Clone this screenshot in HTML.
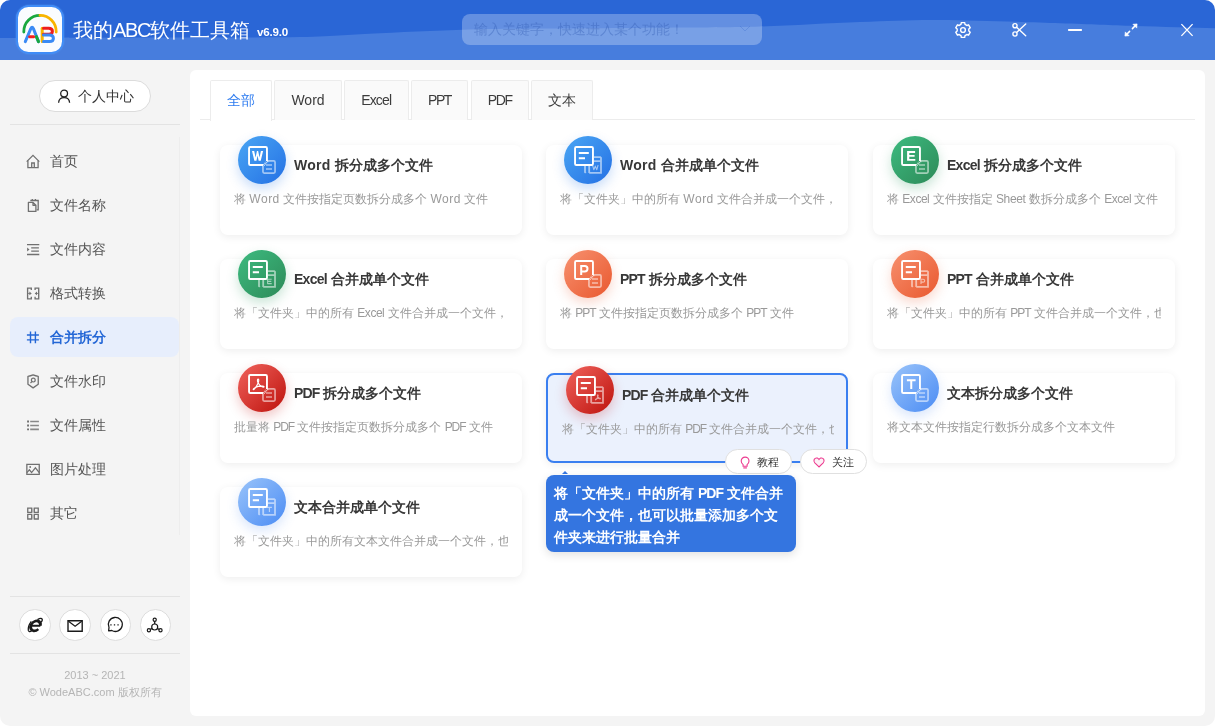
<!DOCTYPE html>
<html><head><meta charset="utf-8">
<style>
*{margin:0;padding:0;box-sizing:border-box}
html,body{width:1215px;height:726px;overflow:hidden;background:#fff;font-family:"Liberation Sans",sans-serif}
.win{position:absolute;left:0;top:0;width:1215px;height:726px;background:#f4f4f4;border-radius:10px;overflow:hidden;will-change:transform}
.hdr{position:absolute;left:0;top:0;width:1215px;height:60px}
.abs{position:absolute}
.title{position:absolute;left:73px;top:17px;color:#fff;font-size:20px;letter-spacing:0px;white-space:nowrap}
.ver{position:absolute;left:257px;top:25px;color:#fff;font-size:11.6px;font-weight:bold;letter-spacing:-0.2px}
.search{position:absolute;left:462px;top:14px;width:300px;height:31px;border-radius:8px;background:rgba(255,255,255,.27)}
.search span{position:absolute;left:12px;top:7px;font-size:14px;color:rgba(45,85,175,.36);white-space:nowrap}
.side{position:absolute;left:0;top:60px;width:190px;height:666px}
.pill{position:absolute;left:39px;top:80px;width:111.5px;height:32px;border:1px solid #dcdcdc;border-radius:16px;background:#fff}
.pill span{position:absolute;left:38px;top:7px;font-size:14px;color:#333}
.navt{font-size:14px;white-space:nowrap}
.nav{position:absolute;left:10px;width:169px;height:40px;border-radius:8px}
.nav span{position:absolute;left:40px;top:10px;font-size:14px;color:#555}
.nav svg{position:absolute;left:16px;top:13px}
.nav.on{background:#e6eefc}
.nav.on span{color:#2a6ae0;font-weight:bold}
.panel{position:absolute;left:190px;top:70px;width:1015px;height:646px;background:#fff;border-radius:6px}
.tab{position:absolute;top:80px;height:40px;border:1px solid #ececec;border-bottom:none;background:#fafafa;border-radius:2px 2px 0 0;font-size:14px;color:#3c3c3c;text-align:center;line-height:38px}
.tab.on{background:#fff;color:#2e7cf0;height:41px}
.card{position:absolute;width:302px;height:90px;background:#fff;border-radius:8px;box-shadow:0 2px 8px rgba(0,0,0,.07)}
.card .ic{position:absolute;left:18px;top:-9px;width:48px;height:48px;border-radius:50%}
.card .t{position:absolute;left:74px;top:12px;font-size:14px;font-weight:bold;color:#383838;white-space:nowrap}
.l{letter-spacing:-0.3px}
.lt{letter-spacing:-0.6px}
.card .d{position:absolute;left:14px;top:46px;font-size:12px;color:#999;white-space:nowrap;width:274px;overflow:hidden}
.card.hov{border:2px solid #3a7ff0;background:#ebf1fd}
.card.hov .ic{left:18px;top:-9px}
.card.hov .t{left:74px;top:12px}
.card.hov .d{left:14px;top:46px;width:272px}
.blue{background:linear-gradient(135deg,#4aa6f4,#2470e4);box-shadow:0 5px 12px rgba(40,120,230,.25)}
.green{background:linear-gradient(135deg,#3dbb80,#2d8a58);box-shadow:0 5px 12px rgba(40,150,90,.25)}
.orange{background:linear-gradient(135deg,#f7916f,#e9582f);box-shadow:0 5px 12px rgba(235,100,60,.25)}
.red{background:linear-gradient(135deg,#f0625c,#bd120c);box-shadow:0 5px 12px rgba(200,30,30,.25)}
.lblue{background:linear-gradient(135deg,#9ac4fa,#4b8cf4);box-shadow:0 5px 12px rgba(80,140,240,.22)}
.ic svg{position:absolute;left:0;top:0}
.btn{position:absolute;top:449px;height:25px;border:1px solid #e0e0e0;border-radius:13px;background:#fff;font-size:12px;color:#333}
.btn span{position:absolute;left:31px;top:5px;font-size:11px;color:#333}
.btn svg{position:absolute;left:12px;top:5px}
.tip{position:absolute;left:546px;top:475px;width:250px;height:77px;background:#3475e0;border-radius:8px;color:#fff;font-size:14px;font-weight:bold;line-height:22px;padding:7px 8px 0 8px;box-shadow:0 3px 10px rgba(0,0,0,.12)}
.tip:before{content:"";position:absolute;left:15.6px;top:-3.8px;border-left:3.7px solid transparent;border-right:3.7px solid transparent;border-bottom:3.8px solid #3475e0}
.circ{position:absolute;top:609.2px;width:31.4px;height:31.4px;border-radius:50%;border:1px solid #ddd;background:#fff}
.circ svg{position:absolute;left:6px;top:6px}
.copy{position:absolute;left:0;width:190px;text-align:center;font-size:11px;color:#b5b5b5}
</style></head><body>
<div class="win">
  <svg class="hdr" width="1215" height="60" viewBox="0 0 1215 60">
    <rect width="1215" height="60" fill="#2a66d6"/>
    <path d="M0 38 C33.3 37.83 100.0 37.67 150 37.5 C200.0 37.33 261.7 37.72 300 37 C338.3 36.28 350.0 34.48 380 33.2 C410.0 31.92 450.0 30.07 480 29.3 C510.0 28.53 526.7 28.88 560 28.6 C593.3 28.32 646.7 27.95 680 27.6 C713.3 27.25 730.0 27.43 760 26.5 C790.0 25.57 830.0 23.10 860 22 C890.0 20.90 906.7 19.70 940 19.9 C973.3 20.10 1027.5 22.20 1060 23.2 C1092.5 24.20 1109.2 25.07 1135 25.9 C1160.8 26.73 1193.3 27.60 1215 28.2 V60 H0 Z" fill="#477ddd"/>
  </svg>
  <!-- logo -->
  <div class="abs" style="left:16px;top:5px;width:48px;height:49px;border-radius:14px;background:#3f8cf7;box-shadow:0 0 1.5px #5b9ff8"></div>
  <div class="abs" style="left:18px;top:7px;width:44px;height:45px;border-radius:10.5px;background:#fafcff"></div>
  <svg class="abs" style="left:0;top:0" width="80" height="60" viewBox="0 0 80 60">
    <path d="M23.8 32 A16.2 16.2 0 0 1 40 15.3" stroke="#19a83f" stroke-width="2.8" fill="none" stroke-linecap="round"/>
    <path d="M40 15.3 A16.2 16.2 0 0 1 56.2 32" stroke="#f8b400" stroke-width="2.8" fill="none" stroke-linecap="round"/>
    <path d="M25.3 41.6 L30.8 28.6 Q32.1 26 33.4 28.6 L38.5 41.6" stroke="#3a8af5" stroke-width="3" fill="none" stroke-linecap="round" stroke-linejoin="round"/>
    <path d="M36.4 36.6 L38.5 41.6" stroke="#19a83f" stroke-width="3" stroke-linecap="round"/>
    <path d="M29.6 36.8 H33.6" stroke="#f42020" stroke-width="3" stroke-linecap="round"/>
    <path d="M42.2 28.2 V41.6" stroke="#f8b400" stroke-width="3" stroke-linecap="round"/>
    <path d="M43.5 28.2 H48.6 Q52.4 28.2 52.4 31.2 Q52.4 34.2 48.6 34.2 H43.5" stroke="#ee1c1c" stroke-width="3" fill="none" stroke-linecap="round"/>
    <path d="M43.5 34.9 H49.4 Q53.4 34.9 53.4 38.2 Q53.4 41.6 49.4 41.6 H43.5" stroke="#3a8af5" stroke-width="3" fill="none" stroke-linecap="round"/>
  </svg>
  <div class="title">我的<span style="letter-spacing:-1.3px">ABC</span>软件工具箱</div>
  <div class="ver">v6.9.0</div>
  <div class="search"><span>输入关键字，快速进入某个功能！</span>
    <svg class="abs" style="left:277px;top:11px" width="12" height="8" viewBox="0 0 12 8"><path d="M1 1 L6 6 L11 1" stroke="rgba(50,100,200,.28)" stroke-width="1" fill="none"/></svg>
  </div>
  <!-- window controls -->
  <svg class="abs" style="left:953px;top:20px" width="20" height="20" viewBox="0 0 20 20">
    <path d="M7.98 4.46 L8.29 2.59 L11.71 2.59 L12.02 4.46 L13.79 5.48 L15.56 4.82 L17.27 7.78 L15.81 8.98 L15.81 11.02 L17.27 12.22 L15.56 15.18 L13.79 14.52 L12.02 15.54 L11.71 17.41 L8.29 17.41 L7.98 15.54 L6.21 14.52 L4.44 15.18 L2.73 12.22 L4.19 11.02 L4.19 8.98 L2.73 7.78 L4.44 4.82 L6.21 5.48Z" stroke="#fff" stroke-width="1.4" fill="none" stroke-linejoin="round"/>
    <circle cx="10" cy="10" r="2.4" stroke="#fff" stroke-width="1.4" fill="none"/>
  </svg>
  <svg class="abs" style="left:1009px;top:20px" width="20" height="20" viewBox="0 0 20 20">
    <circle cx="6" cy="5.7" r="2.1" stroke="#fff" stroke-width="1.4" fill="none"/>
    <circle cx="6" cy="14" r="2.1" stroke="#fff" stroke-width="1.4" fill="none"/>
    <path d="M7.6 7.3 L16.7 15.7 M7.6 12.4 L16.7 4" stroke="#fff" stroke-width="1.4" stroke-linecap="round"/>
  </svg>
  <svg class="abs" style="left:1065px;top:20px" width="20" height="20" viewBox="0 0 20 20"><path d="M3.8 10 H16.2" stroke="#fff" stroke-width="1.8" stroke-linecap="round"/></svg>
  <svg class="abs" style="left:1121px;top:20px" width="20" height="20" viewBox="0 0 20 20">
    <path d="M11.4 8.6 L14.2 5.8 M8.6 11.4 L5.8 14.2" stroke="#fff" stroke-width="1.5" stroke-linecap="round"/><path d="M16.1 3.9 L11.9 4.3 L15.7 8.1 Z M3.9 16.1 L4.3 11.9 L8.1 15.7 Z" fill="#fff" stroke="#fff" stroke-width=".6" stroke-linejoin="round"/>
  </svg>
  <svg class="abs" style="left:1177px;top:20px" width="20" height="20" viewBox="0 0 20 20"><path d="M4.4 4.1 L15.6 15.9 M15.6 4.1 L4.4 15.9" stroke="#fff" stroke-width="1.3"/></svg>

  <!-- sidebar -->
  <div class="pill"><svg class="abs" style="left:16px;top:7.2px" width="16" height="16" viewBox="0 0 16 16"><circle cx="8.1" cy="5.6" r="3.4" stroke="#222" stroke-width="1.3" fill="none"/><path d="M2.6 14.7 Q2.9 9.6 8.1 9.6 Q13.3 9.6 13.6 14.7" stroke="#222" stroke-width="1.3" fill="none"/></svg><span>个人中心</span></div>
  <div class="abs" style="left:10px;top:124px;width:170px;height:1px;background:#e3e3e3"></div>
  <div class="abs" style="left:179px;top:137px;width:1px;height:398px;background:#ededed"></div>
  <div id="navs"></div>
  <svg class="abs" style="left:26px;top:152.5px" width="16" height="16" viewBox="0 0 16 16"><path d="M0.7 8.6 L7 2.3 L13.3 8.6" stroke="#707070" stroke-width="1.3" fill="none" stroke-linejoin="miter"/><path d="M1.9 7.4 V14.6 H12.1 V7.4 M5.7 14.6 V10 H8.3 V14.6" stroke="#707070" stroke-width="1.3" fill="none"/></svg>
  <div class="abs navt" style="left:50px;top:153.0px;color:#555;font-weight:normal">首页</div>
  <svg class="abs" style="left:26px;top:196.5px" width="16" height="16" viewBox="0 0 16 16"><path d="M4.3 3.5 H12.2 V12.9 H10.6 M6.3 2 V3.5 M9.4 2 V3.5" stroke="#707070" stroke-width="1.3" fill="none"/><path d="M2.4 5.4 H7 L9.9 8.3 V14.4 H2.4 Z M7 5.4 V8.3 H9.9" stroke="#707070" stroke-width="1.3" fill="none" stroke-linejoin="round"/></svg>
  <div class="abs navt" style="left:50px;top:197.0px;color:#555;font-weight:normal">文件名称</div>
  <svg class="abs" style="left:26px;top:240.5px" width="16" height="16" viewBox="0 0 16 16"><path d="M1 3.6 H13.3 M1 13.5 H13.3" stroke="#707070" stroke-width="1.4"/><path d="M5.2 6.9 H12.9 M5.2 10.1 H12.9" stroke="#707070" stroke-width="1.3"/><path d="M1.1 6.4 L3.5 8.5 L1.1 10.6 Z" fill="#707070"/></svg>
  <div class="abs navt" style="left:50px;top:241.0px;color:#555;font-weight:normal">文件内容</div>
  <svg class="abs" style="left:26px;top:284.5px" width="16" height="16" viewBox="0 0 16 16"><path d="M5.3 5.1 V3.1 H1.6 V13.8 H5.3 V11.8 M9.1 5.1 V3.1 H12.7 V13.8 H9.1 V11.8" stroke="#707070" stroke-width="1.35" fill="none"/><path d="M3.4 6.6 L5.7 8.45 L3.4 10.3 Z M11 6.6 L8.7 8.45 L11 10.3 Z" fill="#707070"/><path d="M2 8.45 H4 M10.4 8.45 H12.4" stroke="#707070" stroke-width=".8"/></svg>
  <div class="abs navt" style="left:50px;top:285.0px;color:#555;font-weight:normal">格式转换</div>
  <div class="abs" style="left:10px;top:317px;width:169px;height:40px;border-radius:8px;background:#e7eefc"></div>
  <svg class="abs" style="left:26px;top:328.5px" width="16" height="16" viewBox="0 0 16 16"><path d="M4.5 2.5 V14.3 M9.4 2.5 V14.3 M0.9 6 H12.9 M0.9 10.9 H12.9" stroke="#2467d6" stroke-width="1.4"/></svg>
  <div class="abs navt" style="left:50px;top:329.0px;color:#2467d6;font-weight:bold">合并拆分</div>
  <svg class="abs" style="left:26px;top:372.5px" width="16" height="16" viewBox="0 0 16 16"><path d="M1.95 11.2 V3.3 Q4.5 3 7.1 1.95 Q9.7 3 12.25 3.3 V11.2 L7.1 14.9 Z" stroke="#707070" stroke-width="1.3" fill="none" stroke-linejoin="round"/><circle cx="7.3" cy="7.1" r="1.9" stroke="#707070" stroke-width="1.2" fill="none"/><path d="M5.9 8.6 L4.5 10" stroke="#707070" stroke-width="1.2"/></svg>
  <div class="abs navt" style="left:50px;top:373.0px;color:#555;font-weight:normal">文件水印</div>
  <svg class="abs" style="left:26px;top:416.5px" width="16" height="16" viewBox="0 0 16 16"><path d="M1.1 4.5 H3 M1.1 8.5 H3 M1.1 12.4 H3" stroke="#707070" stroke-width="1.8"/><path d="M4.2 4.5 H12.9 M4.2 8.5 H12.9 M4.2 12.4 H12.9" stroke="#888" stroke-width="1.6"/></svg>
  <div class="abs navt" style="left:50px;top:417.0px;color:#555;font-weight:normal">文件属性</div>
  <svg class="abs" style="left:26px;top:460.5px" width="16" height="16" viewBox="0 0 16 16"><path d="M0.85 3.45 H13.25 V13.45 H0.85 Z" stroke="#707070" stroke-width="1.3" fill="none"/><path d="M0.85 11.6 L3.4 8.8 L5.6 11.6 L9.4 6.8 L13.25 11.6" stroke="#707070" stroke-width="1.2" fill="none"/><circle cx="4.2" cy="6" r=".9" fill="#707070"/></svg>
  <div class="abs navt" style="left:50px;top:461.0px;color:#555;font-weight:normal">图片处理</div>
  <svg class="abs" style="left:26px;top:504.5px" width="16" height="16" viewBox="0 0 16 16"><path d="M1.75 3.1 H5.7 V7.4 H1.75 Z M8.3 3.1 H12.25 V7.4 H8.3 Z M1.75 9.4 H5.7 V14 H1.75 Z M8.3 9.4 H12.25 V14 H8.3 Z" stroke="#707070" stroke-width="1.3" fill="none"/><path d="M6.4 5.25 H7.6 M6.4 11.7 H7.6" stroke="#aaa" stroke-width="4"/></svg>
  <div class="abs navt" style="left:50px;top:505.0px;color:#555;font-weight:normal">其它</div>
  <div class="abs" style="left:10px;top:596px;width:170px;height:1px;background:#e3e3e3"></div>
  <div class="circ" style="left:19.2px"></div>
  <div class="circ" style="left:59.4px"></div>
  <div class="circ" style="left:99.6px"></div>
  <div class="circ" style="left:139.8px"></div>
  <svg class="abs" style="left:0;top:600px" width="190" height="50" viewBox="0 600 190 50">
    <g transform="translate(35.5 625.3) skewX(-14) translate(-35.5 -625.3)">
      <path d="M31.2 625.7 H40.6" stroke="#1a1a1a" stroke-width="1.9"/>
      <path d="M40.5 625.7 A4.8 5 0 1 0 39.3 629.2" stroke="#1a1a1a" stroke-width="2.8" fill="none"/>
    </g>
    <path d="M37.5 619.6 Q41.5 617.4 42.3 619.4 Q42.6 620.6 41 622.4" stroke="#1a1a1a" stroke-width="1.3" fill="none"/>
    <path d="M31.3 621.3 Q27.6 626.5 28.3 630.4 Q28.9 632.2 31.6 631.2" stroke="#1a1a1a" stroke-width="1.3" fill="none"/>
    <path d="M27.8 620.7 H42 V631.3 H27.8 Z" stroke="#1a1a1a" stroke-width="1.4" fill="none" transform="translate(40.2 0)"/>
    <path d="M28.3 621.2 L34.9 626.3 L41.5 621.2" stroke="#1a1a1a" stroke-width="1.2" fill="none" transform="translate(40.2 0)"/>
    <g transform="translate(79.6 0)">
      <path d="M29 630.8 L29.4 627.5 A7 7 0 1 1 32.2 630.5 Z" stroke="#1a1a1a" stroke-width="1.3" fill="none" stroke-linejoin="round"/>
      <path d="M30.7 624.9 H32 M34.25 624.9 H35.55 M37.8 624.9 H39.1" stroke="#1a1a1a" stroke-width="1.4"/>
    </g>
    <g transform="translate(119.8 0)" stroke="#1a1a1a" fill="none">
      <circle cx="34.9" cy="619.7" r="1.6" stroke-width="1.2"/>
      <circle cx="34.9" cy="627" r="3" stroke-width="1.2"/>
      <circle cx="29.1" cy="630.2" r="1.6" stroke-width="1.2"/>
      <circle cx="40.7" cy="630.2" r="1.6" stroke-width="1.2"/>
      <path d="M34.9 621.3 V624 M32.3 628.5 L30.5 629.4 M37.5 628.5 L39.3 629.4" stroke-width="1.3"/>
    </g>
  </svg>
  <div class="abs" style="left:10px;top:653px;width:170px;height:1px;background:#e3e3e3"></div>
  <div class="copy" style="top:669px">2013 ~ 2021</div>
  <div class="copy" style="top:685px">© WodeABC.com 版权所有</div>

  <!-- panel -->
  <div class="panel"></div>
  <div class="abs" style="left:200px;top:119px;width:995px;height:1px;background:#ececec"></div>
  <div class="tab on" style="left:210px;width:62px">全部</div>
  <div class="tab" style="left:274px;width:68px">Word</div>
  <div class="tab" style="left:344px;width:64.5px"><span style="letter-spacing:-0.8px">Excel</span></div>
  <div class="tab" style="left:411px;width:57px"><span style="letter-spacing:-1.4px">PPT</span></div>
  <div class="tab" style="left:470.5px;width:58.5px"><span style="letter-spacing:-1.3px">PDF</span></div>
  <div class="tab" style="left:531px;width:62px">文本</div>

  <!--CARDS-->
<div class="card" style="left:220px;top:145px"><div class="ic blue"><svg width="48" height="48" viewBox="0 0 48 48"><path d="M12.3 11.05H27.7Q28.95 11.05 28.95 12.3V25.1M25.1 28.95H12.3Q11.05 28.95 11.05 27.7V12.3Q11.05 11.05 12.3 11.05" stroke="#fff" stroke-width="1.9" fill="none"/><path d="M14 15 H16.2 L17.55 21.6 L18.95 15 H20.15 L21.55 21.6 L22.9 15 H25.1 L22.75 24.8 H20.65 L19.55 19.6 L18.45 24.8 H16.35 Z" fill="#fff"/><path d="M29.4 24.95H35.8Q37.05 24.95 37.05 26.2V35.8Q37.05 37.05 35.8 37.05H26.2Q24.95 37.05 24.95 35.8V29.4" stroke="rgba(255,255,255,.55)" stroke-width="1.7" fill="none"/><path d="M28 28.9H34M28 33H34" stroke="rgba(255,255,255,.55)" stroke-width="1.5"/><path d="M29.8 25 L25 29.8" stroke="rgba(255,255,255,.8)" stroke-width="2.2" stroke-dasharray=".9 .75"/></svg></div><div class="t"><span style="letter-spacing:0.3px">Word</span> 拆分成多个文件</div><div class="d">将 <span style="letter-spacing:0.5px">Word</span> 文件按指定页数拆分成多个 <span style="letter-spacing:0.5px">Word</span> 文件</div></div>
<div class="card" style="left:546px;top:145px"><div class="ic blue"><svg width="48" height="48" viewBox="0 0 48 48"><path d="M30 21.1H36.2L37 21.9V36.9H25.2M21 30V36.1L21.8 36.9M30 25.1H37M25.2 30V36.9" stroke="rgba(255,255,255,.55)" stroke-width="1.8" fill="none"/><path d="M28.5 29.1 L29.8 33.7 L31.3 30.1 L32.8 33.7 L34.1 29.1" stroke="rgba(255,255,255,.55)" stroke-width="1.1" fill="none" stroke-linejoin="round"/><path d="M12.3 11.05H27.7Q28.95 11.05 28.95 12.3V27.7Q28.95 28.95 27.7 28.95H12.3Q11.05 28.95 11.05 27.7V12.3Q11.05 11.05 12.3 11.05Z" stroke="#fff" stroke-width="1.9" fill="none"/><path d="M14.8 16.9H24.8M14.8 22.2H21" stroke="#fff" stroke-width="2"/></svg></div><div class="t"><span style="letter-spacing:0.3px">Word</span> 合并成单个文件</div><div class="d">将「文件夹」中的所有 <span style="letter-spacing:0.5px">Word</span> 文件合并成一个文件，也可以批量添加多个文件夹来进行批量合并</div></div>
<div class="card" style="left:873px;top:145px"><div class="ic green"><svg width="48" height="48" viewBox="0 0 48 48"><path d="M12.3 11.05H27.7Q28.95 11.05 28.95 12.3V25.1M25.1 28.95H12.3Q11.05 28.95 11.05 27.7V12.3Q11.05 11.05 12.3 11.05" stroke="#fff" stroke-width="1.9" fill="none"/><path d="M16.1 15 H24.1 V16.9 H18.3 V18.9 H23.6 V20.8 H18.3 V22.9 H24.3 V24.8 H16.1 Z" fill="#fff"/><path d="M29.4 24.95H35.8Q37.05 24.95 37.05 26.2V35.8Q37.05 37.05 35.8 37.05H26.2Q24.95 37.05 24.95 35.8V29.4" stroke="rgba(255,255,255,.55)" stroke-width="1.7" fill="none"/><path d="M28 28.9H34M28 33H34" stroke="rgba(255,255,255,.55)" stroke-width="1.5"/><path d="M29.8 25 L25 29.8" stroke="rgba(255,255,255,.8)" stroke-width="2.2" stroke-dasharray=".9 .75"/></svg></div><div class="t"><span style="letter-spacing:-0.72px">Excel</span> 拆分成多个文件</div><div class="d">将 <span style="letter-spacing:-0.48px">Excel</span> 文件按指定 <span style="letter-spacing:-0.36px">Sheet</span> 数拆分成多个 <span style="letter-spacing:-0.48px">Excel</span> 文件</div></div>
<div class="card" style="left:220px;top:259px"><div class="ic green"><svg width="48" height="48" viewBox="0 0 48 48"><path d="M30 21.1H36.2L37 21.9V36.9H25.2M21 30V36.1L21.8 36.9M30 25.1H37M25.2 30V36.9" stroke="rgba(255,255,255,.55)" stroke-width="1.8" fill="none"/><path d="M33.7 29.2 H29.6 V33.6 H33.7 M29.6 31.4 H33.3" stroke="rgba(255,255,255,.55)" stroke-width="1.1" fill="none" stroke-linejoin="round"/><path d="M12.3 11.05H27.7Q28.95 11.05 28.95 12.3V27.7Q28.95 28.95 27.7 28.95H12.3Q11.05 28.95 11.05 27.7V12.3Q11.05 11.05 12.3 11.05Z" stroke="#fff" stroke-width="1.9" fill="none"/><path d="M14.8 16.9H24.8M14.8 22.2H21" stroke="#fff" stroke-width="2"/></svg></div><div class="t"><span style="letter-spacing:-0.72px">Excel</span> 合并成单个文件</div><div class="d">将「文件夹」中的所有 <span style="letter-spacing:-0.48px">Excel</span> 文件合并成一个文件，也可以批量添加多个文件夹来进行批量合并</div></div>
<div class="card" style="left:546px;top:259px"><div class="ic orange"><svg width="48" height="48" viewBox="0 0 48 48"><path d="M12.3 11.05H27.7Q28.95 11.05 28.95 12.3V25.1M25.1 28.95H12.3Q11.05 28.95 11.05 27.7V12.3Q11.05 11.05 12.3 11.05" stroke="#fff" stroke-width="1.9" fill="none"/><path d="M17.2 25 V16.1 H20.7 Q23.5 16.1 23.5 18.8 Q23.5 21.5 20.7 21.5 H17.2" stroke="#fff" stroke-width="2" fill="none"/><path d="M29.4 24.95H35.8Q37.05 24.95 37.05 26.2V35.8Q37.05 37.05 35.8 37.05H26.2Q24.95 37.05 24.95 35.8V29.4" stroke="rgba(255,255,255,.55)" stroke-width="1.7" fill="none"/><path d="M28 28.9H34M28 33H34" stroke="rgba(255,255,255,.55)" stroke-width="1.5"/><path d="M29.8 25 L25 29.8" stroke="rgba(255,255,255,.8)" stroke-width="2.2" stroke-dasharray=".9 .75"/></svg></div><div class="t"><span style="letter-spacing:-0.83px">PPT</span> 拆分成多个文件</div><div class="d">将 <span style="letter-spacing:-1.0px">PPT</span> 文件按指定页数拆分成多个 <span style="letter-spacing:-1.0px">PPT</span> 文件</div></div>
<div class="card" style="left:873px;top:259px"><div class="ic orange"><svg width="48" height="48" viewBox="0 0 48 48"><path d="M30 21.1H36.2L37 21.9V36.9H25.2M21 30V36.1L21.8 36.9M30 25.1H37M25.2 30V36.9" stroke="rgba(255,255,255,.55)" stroke-width="1.8" fill="none"/><path d="M30 33.9 V29.3 H32.1 Q33.7 29.3 33.7 30.7 Q33.7 32.1 32.1 32.1 H30" stroke="rgba(255,255,255,.55)" stroke-width="1.1" fill="none" stroke-linejoin="round"/><path d="M12.3 11.05H27.7Q28.95 11.05 28.95 12.3V27.7Q28.95 28.95 27.7 28.95H12.3Q11.05 28.95 11.05 27.7V12.3Q11.05 11.05 12.3 11.05Z" stroke="#fff" stroke-width="1.9" fill="none"/><path d="M14.8 16.9H24.8M14.8 22.2H21" stroke="#fff" stroke-width="2"/></svg></div><div class="t"><span style="letter-spacing:-0.83px">PPT</span> 合并成单个文件</div><div class="d">将「文件夹」中的所有 <span style="letter-spacing:-1.0px">PPT</span> 文件合并成一个文件，也可以批量添加多个文件夹来进行批量合并</div></div>
<div class="card" style="left:220px;top:373px"><div class="ic red"><svg width="48" height="48" viewBox="0 0 48 48"><path d="M12.3 11.05H27.7Q28.95 11.05 28.95 12.3V25.1M25.1 28.95H12.3Q11.05 28.95 11.05 27.7V12.3Q11.05 11.05 12.3 11.05" stroke="#fff" stroke-width="1.9" fill="none"/><path d="M19.7 15.3 Q20.9 14.6 20.7 16.9 Q20.4 19.6 17.1 24.2 Q15.7 26 15.2 25.4 Q14.9 24.7 17.4 23.4 Q20.6 21.8 24.8 22.1 Q26.3 22.4 25.9 23 Q25.4 23.5 23.6 22.6 Q21.4 21.2 19.9 18.5 Q19.1 16.5 19.7 15.3 Z" stroke="#fff" stroke-width="1.15" fill="none" stroke-linejoin="round"/><path d="M29.4 24.95H35.8Q37.05 24.95 37.05 26.2V35.8Q37.05 37.05 35.8 37.05H26.2Q24.95 37.05 24.95 35.8V29.4" stroke="rgba(255,255,255,.55)" stroke-width="1.7" fill="none"/><path d="M28 28.9H34M28 33H34" stroke="rgba(255,255,255,.55)" stroke-width="1.5"/><path d="M29.8 25 L25 29.8" stroke="rgba(255,255,255,.8)" stroke-width="2.2" stroke-dasharray=".9 .75"/></svg></div><div class="t"><span style="letter-spacing:-0.9px">PDF</span> 拆分成多个文件</div><div class="d">批量将 <span style="letter-spacing:-1.1px">PDF</span> 文件按指定页数拆分成多个 <span style="letter-spacing:-1.1px">PDF</span> 文件</div></div>
<div class="card hov" style="left:546px;top:373px"><div class="ic red"><svg width="48" height="48" viewBox="0 0 48 48"><path d="M30 21.1H36.2L37 21.9V36.9H25.2M21 30V36.1L21.8 36.9M30 25.1H37M25.2 30V36.9" stroke="rgba(255,255,255,.55)" stroke-width="1.8" fill="none"/><path d="M31.6 28.9 Q32.2 28.7 32.1 29.8 Q31.9 31.3 30.2 33.4 Q29.6 34.1 29.4 33.8 Q29.3 33.4 30.6 32.8 Q32.2 32.1 34 32.3 Q34.6 32.5 34.3 32.8 Q33.9 33 33.1 32.5 Q32 31.7 31.5 30.3 Q31.3 29.3 31.6 28.9" stroke="rgba(255,255,255,.55)" stroke-width="1.1" fill="none" stroke-linejoin="round"/><path d="M12.3 11.05H27.7Q28.95 11.05 28.95 12.3V27.7Q28.95 28.95 27.7 28.95H12.3Q11.05 28.95 11.05 27.7V12.3Q11.05 11.05 12.3 11.05Z" stroke="#fff" stroke-width="1.9" fill="none"/><path d="M14.8 16.9H24.8M14.8 22.2H21" stroke="#fff" stroke-width="2"/></svg></div><div class="t"><span style="letter-spacing:-0.9px">PDF</span> 合并成单个文件</div><div class="d">将「文件夹」中的所有 <span style="letter-spacing:-1.1px">PDF</span> 文件合并成一个文件，也可以批量添加多个文件夹来进行批量合并</div></div>
<div class="card" style="left:873px;top:373px"><div class="ic lblue"><svg width="48" height="48" viewBox="0 0 48 48"><path d="M12.3 11.05H27.7Q28.95 11.05 28.95 12.3V25.1M25.1 28.95H12.3Q11.05 28.95 11.05 27.7V12.3Q11.05 11.05 12.3 11.05" stroke="#fff" stroke-width="1.9" fill="none"/><path d="M15.9 16.3 H24.6 M20.25 16.3 V24.9" stroke="#fff" stroke-width="2" fill="none"/><path d="M29.4 24.95H35.8Q37.05 24.95 37.05 26.2V35.8Q37.05 37.05 35.8 37.05H26.2Q24.95 37.05 24.95 35.8V29.4" stroke="rgba(255,255,255,.55)" stroke-width="1.7" fill="none"/><path d="M28 28.9H34M28 33H34" stroke="rgba(255,255,255,.55)" stroke-width="1.5"/><path d="M29.8 25 L25 29.8" stroke="rgba(255,255,255,.8)" stroke-width="2.2" stroke-dasharray=".9 .75"/></svg></div><div class="t">文本拆分成多个文件</div><div class="d">将文本文件按指定行数拆分成多个文本文件</div></div>
<div class="card" style="left:220px;top:487px"><div class="ic lblue"><svg width="48" height="48" viewBox="0 0 48 48"><path d="M30 21.1H36.2L37 21.9V36.9H25.2M21 30V36.1L21.8 36.9M30 25.1H37M25.2 30V36.9" stroke="rgba(255,255,255,.55)" stroke-width="1.8" fill="none"/><path d="M28.9 29.4 H33.9 M31.4 29.4 V33.9" stroke="rgba(255,255,255,.55)" stroke-width="1.1" fill="none" stroke-linejoin="round"/><path d="M12.3 11.05H27.7Q28.95 11.05 28.95 12.3V27.7Q28.95 28.95 27.7 28.95H12.3Q11.05 28.95 11.05 27.7V12.3Q11.05 11.05 12.3 11.05Z" stroke="#fff" stroke-width="1.9" fill="none"/><path d="M14.8 16.9H24.8M14.8 22.2H21" stroke="#fff" stroke-width="2"/></svg></div><div class="t">文本合并成单个文件</div><div class="d">将「文件夹」中的所有文本文件合并成一个文件，也可以批量添加多个文件夹来进行批量合并</div></div>
<div class="btn" style="left:725px;width:67px"><svg width="14" height="14" viewBox="0 0 14 14"><path d="M5.1 9.6 Q3.2 8.2 3.2 6 A3.9 3.9 0 0 1 11 6 Q11 8.2 9.1 9.6 V11.2 H5.1 Z" stroke="#ec3a8f" stroke-width="1.1" fill="none"/><path d="M5.3 12.9 H8.9" stroke="#ec3a8f" stroke-width="1.2"/></svg><span>教程</span></div>
<div class="btn" style="left:800px;width:67px"><svg style="left:10.8px" width="14" height="14" viewBox="0 0 14 14"><path d="M7 11.9 L2.8 7.8 Q1.3 6.2 2.2 4.4 Q3.4 2.5 5.3 3.1 Q6.3 3.5 7 4.5 Q7.7 3.5 8.7 3.1 Q10.6 2.5 11.8 4.4 Q12.7 6.2 11.2 7.8 Z" stroke="#ec3a8f" stroke-width="1.1" fill="#fdf0f6"/></svg><span>关注</span></div>
<div class="tip">将「文件夹」中的所有 <span style="letter-spacing:-0.9px">PDF</span> 文件合并成一个文件，也可以批量添加多个文件夹来进行批量合并</div>
<!--/CARDS-->
</div>
</body></html>
